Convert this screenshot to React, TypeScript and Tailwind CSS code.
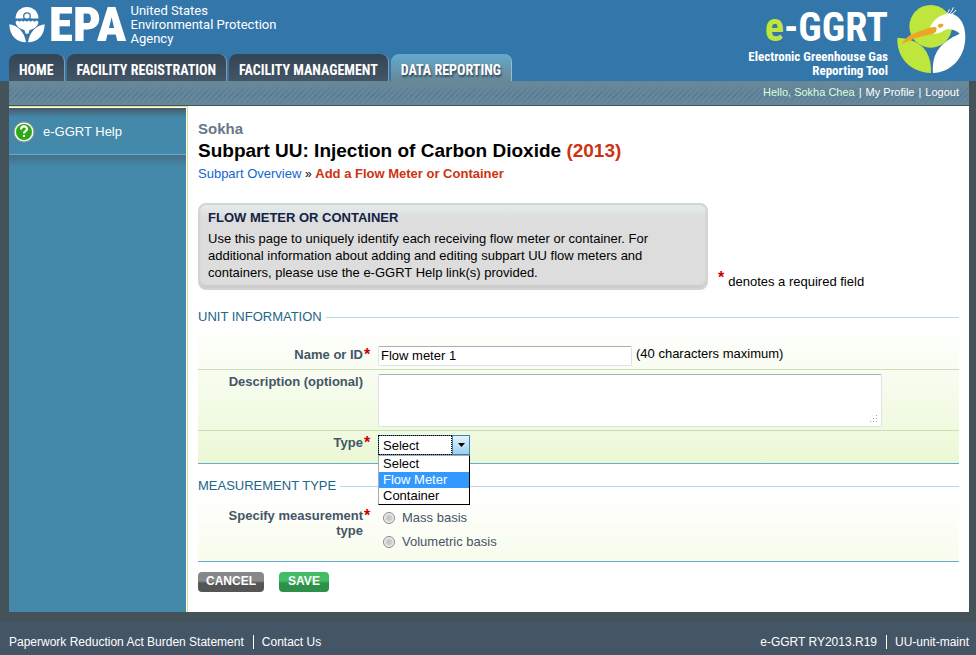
import { useState } from "react";
import type { ReactNode } from "react";

const TABS = [
    { label: "HOME", active: false },
    { label: "FACILITY REGISTRATION", active: false },
    { label: "FACILITY MANAGEMENT", active: false },
    { label: "DATA REPORTING", active: true },
];

const TYPES = ["Select", "Flow Meter", "Container"];

const BASES = ["Mass basis", "Volumetric basis"];

function EpaFlower() {
    return (
        <svg viewBox="0 0 110 110" className="h-9 w-9 shrink-0" fill="#fff" aria-hidden="true">
            <path d="M20 35a35 35 0 0 1 70 0Z" />
            <circle cx="55" cy="28" r="10" stroke="#3377aa" strokeWidth="4" />
            <path d="M42 35h26v6H42Z" fill="#3377aa" />
            <path d="M20 45l6-4 6 4 6-4 6 4 5-4 6 4 6-4 5 4 6-4 6 4 6-4 6 4c-1 13-11 21-27 25l-4 12h-8l-4-12C31 66 21 58 20 45Z" />
            <path d="M1 53c26 4 46 22 51 55C22 108 1 86 1 53Z" />
            <path d="M109 53c-26 4-46 22-51 55 30 0 51-22 51-55Z" />
        </svg>
    );
}

function HeronLogo() {
    return (
        <svg viewBox="0 0 240 240" className="h-20 w-20 shrink-0" aria-hidden="true">
            <circle cx="116" cy="79" r="64" fill="#bfe63c" />
            <path d="M16 113c42 2 74 18 88 44 10 18 14 38 13 62C52 216 14 170 16 113Z" fill="#bfe63c" />
            <path
                d="M123 219c-4-60 22-92 80-118-10-10-28-16-42-12-14 8-26 14-40 12l-6-22c8-16 24-32 48-38 34-4 58 26 57 72-2 62-44 104-97 106Z"
                fill="#fff"
            />
            <path d="M164 46c10-4 16-12 20-24M170 46c10-4 18-8 22-16M158 46c8-4 12-12 14-18" fill="none" stroke="#fff" strokeWidth="3" />
            <path d="M28 133c8-12 18-24 34-31 22-10 46-18 66-22l6 4-2 12c-8 6-18 8-30 10-26 6-50 16-74 27Z" fill="#eda528" />
            <path d="M137 76c4-6 14-6 18-2-2 6-10 12-16 8Z" fill="#eda528" />
        </svg>
    );
}

function Required() {
    return <span className="text-base leading-4 font-bold text-[#cc0000]">*</span>;
}

function Legend({ children }: { children: ReactNode }) {
    return (
        <div className="flex items-center gap-1 text-[13px] leading-4 text-[#226688]">
            <h2>{children}</h2>
            <div className="h-px flex-1 bg-[#b5d9ea]" />
        </div>
    );
}

function RowLabel({ htmlFor, id, required, children }: { htmlFor?: string; id?: string; required?: boolean; children: ReactNode }) {
    return (
        <div className="flex w-[180px] shrink-0 gap-px">
            <label htmlFor={htmlFor} id={id} className="w-[165px] pl-5 text-right leading-[15px] font-bold text-[#445566]">
                {children}
            </label>
            {required && <Required />}
        </div>
    );
}

export default function App() {
    const [name, setName] = useState("Flow meter 1");
    const [type, setType] = useState("Select");

    return (
        <div className="flex min-h-screen flex-col bg-[#445259] font-['Liberation_Sans',Arial,sans-serif] text-[13px] text-black">
            {/* Header */}
            <header className="flex h-[81px] justify-between bg-[#3377aa] pr-1 pl-[9px] text-white">
                <div className="flex flex-col justify-between">
                    <div className="flex h-[50px] items-center">
                        <EpaFlower />
                        <span className="ml-1 font-['Roboto_Condensed','Roboto',sans-serif] text-[49px] leading-[50px] font-black">EPA</span>
                        <p className="ml-1 font-['Roboto',sans-serif] text-[13px] leading-3.5">
                            United States
                            <br />
                            Environmental Protection
                            <br />
                            Agency
                        </p>
                    </div>
                    <nav className="flex gap-0.5">
                        {TABS.map((tab) => (
                            <a
                                key={tab.label}
                                href="#"
                                className={
                                    "flex h-[27px] items-center rounded-t-lg border-r px-2.5 pt-1 font-['Roboto_Condensed','Roboto',sans-serif] text-sm font-bold " +
                                    (tab.active
                                        ? "border-[#9dbdcb] bg-linear-to-b from-[#62a9cc] to-[#678899] [text-shadow:1px_2px_2px_#334455]"
                                        : "border-[#8899aa] bg-linear-to-b from-[#334455] to-[#445566]")
                                }
                            >
                                {tab.label}
                            </a>
                        ))}
                    </nav>
                </div>
                <div className="flex items-start gap-1">
                    <div className="pt-1.5 text-right font-['Roboto_Condensed','Roboto',sans-serif] font-bold">
                        <p className="text-[40px] leading-[44px]">
                            <span className="text-[#bfe63c]">e</span>-GGRT
                        </p>
                        <p className="text-[13px] leading-3.5">
                            Electronic Greenhouse Gas
                            <br />
                            Reporting Tool
                        </p>
                    </div>
                    <HeronLogo />
                </div>
            </header>

            <div className="mr-[7px] ml-[9px] flex flex-1 flex-col">
                {/* User bar */}
                <div className="flex h-6 items-center justify-end gap-1 bg-[linear-gradient(#668899_15%,transparent_60%,#668899),repeating-linear-gradient(135deg,#668899_0_2px,#557799_3px_4px)] pr-2.5 pb-0.5 text-[11px] text-white">
                    <span className="text-[#ddffdd]">Hello, Sokha Chea</span>
                    <span>|</span>
                    <a href="#">My Profile</a>
                    <span>|</span>
                    <a href="#">Logout</a>
                </div>

                <div className="flex flex-1 border-t border-[#445259] bg-white">
                    {/* Sidebar */}
                    <aside className="w-[179px] shrink-0 border-t border-r border-[#cfe48b] pt-px pr-px">
                        <div className="h-full bg-[#4488aa]">
                            <a
                                href="#"
                                className="flex h-[47px] items-center gap-2 border-b border-[#66aacc] bg-linear-to-b from-[#445a66] to-[#4488aa] to-20% pt-0.5 pl-1 text-[13px] text-white"
                            >
                                <svg viewBox="0 0 22 22" className="h-[22px] w-[22px]" aria-hidden="true">
                                    <circle cx="11" cy="11" r="10" fill="#f4f7f4" stroke="#889988" />
                                    <circle cx="11" cy="11" r="8" fill="#2da817" />
                                    <path d="M8 8.5c0-4 6-4 6-.5 0 2.200-3 2.200-3 4.500m0 1.500v2" fill="none" stroke="#fff" strokeWidth="2.200" />
                                </svg>
                                e-GGRT Help
                            </a>
                            <div className="h-3 bg-linear-to-b from-[#447088] to-[#4488aa]" />
                        </div>
                    </aside>

                    {/* Content */}
                    <main className="min-w-0 flex-1 px-2.5 pt-3.5 pb-4">
                        <p className="text-[15px] leading-[18px] font-bold text-[#667788]">Sokha</p>
                        <h1 className="text-[19px] leading-[25px] font-bold">
                            Subpart UU: Injection of Carbon Dioxide <span className="text-[#cc3311]">(2013)</span>
                        </h1>
                        <p className="leading-[22px]">
                            <a href="#" className="text-[#1166cc]">Subpart Overview</a> <span className="text-xs">»</span>{" "}
                            <strong className="text-[#cc3311]">Add a Flow Meter or Container</strong>
                        </p>

                        <div className="mt-[18px] flex items-end gap-2.5">
                            <section className="w-[510px] rounded-lg border-2 border-[#d4d4d4] bg-[#dddddd] bg-linear-to-b from-[#e4ecec] to-[#dddddd] to-15% px-2 pt-[3px] pb-[7px] shadow-[inset_0_-3px_2px_#cccccc]">
                                <h2 className="leading-5 font-bold text-[#112244]">FLOW METER OR CONTAINER</h2>
                                <p className="pt-0.5 leading-[17px]">
                                    Use this page to uniquely identify each receiving flow meter or container. For additional information about adding and editing subpart UU flow meters and containers, please use the e-GGRT Help link(s) provided.
                                </p>
                            </section>
                            <p className="flex items-start gap-1 leading-4">
                                <Required />
                                <span className="pt-1">denotes a required field</span>
                            </p>
                        </div>

                        <form onSubmit={(e) => e.preventDefault()}>
                            <div className="mt-[19px]">
                                <Legend>UNIT INFORMATION</Legend>
                            </div>
                            <div className="border-b border-[#66aacc] bg-linear-to-b from-white to-[#ebf8d5] pt-2">
                                <div className="flex h-[37px] border-b border-[#c8dfb5] pt-3.5">
                                    <RowLabel htmlFor="name" required>Name or ID</RowLabel>
                                    <div className="-mt-px flex h-5 gap-1">
                                        <input
                                            id="name"
                                            value={name}
                                            maxLength={40}
                                            onChange={(e) => setName(e.target.value)}
                                            className="w-[254px] rounded-xs border border-[#dde1ea] border-t-[#abadb3] bg-white px-0.5 outline-none"
                                        />
                                        <span className="leading-4">(40 characters maximum)</span>
                                    </div>
                                </div>
                                <div className="flex h-[61px] border-b border-[#c8dfb5] pt-1">
                                    <RowLabel htmlFor="description">Description (optional)</RowLabel>
                                    <div className="relative h-[53px] w-[504px]">
                                        <textarea
                                            id="description"
                                            className="h-full w-full resize-none rounded-xs border border-[#dde1ea] border-t-[#abadb3] bg-white px-0.5 outline-none"
                                        />
                                        <svg viewBox="0 0 8 8" className="absolute right-1 bottom-1 h-2 w-2" fill="#aaaaaa" aria-hidden="true">
                                            <path d="M6 0h1v1h-1zM3 3h1v1h-1zM6 3h1v1h-1zM0 6h1v1h-1zM3 6h1v1h-1zM6 6h1v1h-1z" />
                                        </svg>
                                    </div>
                                </div>
                                <div className="flex h-8 pt-1">
                                    <RowLabel htmlFor="type" required>Type</RowLabel>
                                    <div className="relative h-5 w-[92px]">
                                        <select
                                            id="type"
                                            value={type}
                                            onChange={(e) => setType(e.target.value)}
                                            className="h-5 w-full appearance-none border border-[#3c7fb1] bg-white pl-1 outline-none"
                                        >
                                            {TYPES.map((t) => (
                                                <option key={t}>{t}</option>
                                            ))}
                                        </select>
                                        <div className="pointer-events-none absolute top-0 left-0 h-5 w-[74px] border border-dotted border-black" />
                                        <div className="pointer-events-none absolute top-0 right-0 flex h-5 w-[18px] items-center justify-center border border-[#3c7fb1] bg-linear-to-b from-[#e5f4fc] to-[#98d1ef]">
                                            <svg viewBox="0 0 7 4" className="h-1 w-[7px]" aria-hidden="true">
                                                <path d="M0 0h7L3.500 4Z" />
                                            </svg>
                                        </div>
                                        <ul className="absolute top-5 left-0 z-10 w-full border border-black border-t-[#aaaaaa] border-l-[#aaaaaa] bg-white">
                                            {TYPES.map((t) => (
                                                <li
                                                    key={t}
                                                    onClick={() => setType(t)}
                                                    className={"pl-1 leading-4 " + (t === "Flow Meter" ? "bg-[#3399ff] text-white" : "")}
                                                >
                                                    {t}
                                                </li>
                                            ))}
                                        </ul>
                                    </div>
                                </div>
                            </div>

                            <div className="mt-3.5">
                                <Legend>MEASUREMENT TYPE</Legend>
                            </div>
                            <div className="flex border-b border-[#66aacc] bg-linear-to-b from-white to-[#f8fcec] pt-3.5 pb-[11px]">
                                <RowLabel id="basis" required>Specify measurement type</RowLabel>
                                <div role="radiogroup" aria-labelledby="basis" className="flex flex-col gap-2 pt-0.5 pl-[5px]">
                                    {BASES.map((basis) => (
                                        <label key={basis} className="flex items-center gap-[7px] leading-4 text-[#445566]">
                                            <input
                                                type="radio"
                                                name="basis"
                                                className="h-3 w-3 appearance-none rounded-full border border-[#888888] bg-[radial-gradient(circle,#c8c8c8_30%,#f4f4f4_70%)]"
                                            />
                                            {basis}
                                        </label>
                                    ))}
                                </div>
                            </div>

                            <div className="mt-2.5 flex gap-[15px] text-xs font-bold text-white">
                                <button type="button" className="h-5 w-[66px] rounded-sm bg-linear-to-b from-[#888888] from-45% to-[#555555] to-55% pb-0.5">
                                    CANCEL
                                </button>
                                <button type="submit" className="h-5 w-[50px] rounded-sm bg-linear-to-b from-[#44bb66] from-45% to-[#2d8f48] to-55% pb-0.5">
                                    SAVE
                                </button>
                            </div>
                        </form>
                    </main>
                </div>
            </div>

            {/* Footer */}
            <footer className="mt-2.5 flex h-[33px] items-center justify-between bg-[#445566] pt-1.5 pr-[7px] pl-[9px] text-xs leading-3.5 text-white">
                <div className="flex">
                    <a href="#" className="border-r border-white pr-[9px]">Paperwork Reduction Act Burden Statement</a>
                    <a href="#" className="pl-2">Contact Us</a>
                </div>
                <div className="flex">
                    <span className="border-r border-white pr-[9px]">e-GGRT RY2013.R19</span>
                    <span className="pl-2">UU-unit-maint</span>
                </div>
            </footer>
        </div>
    );
}
